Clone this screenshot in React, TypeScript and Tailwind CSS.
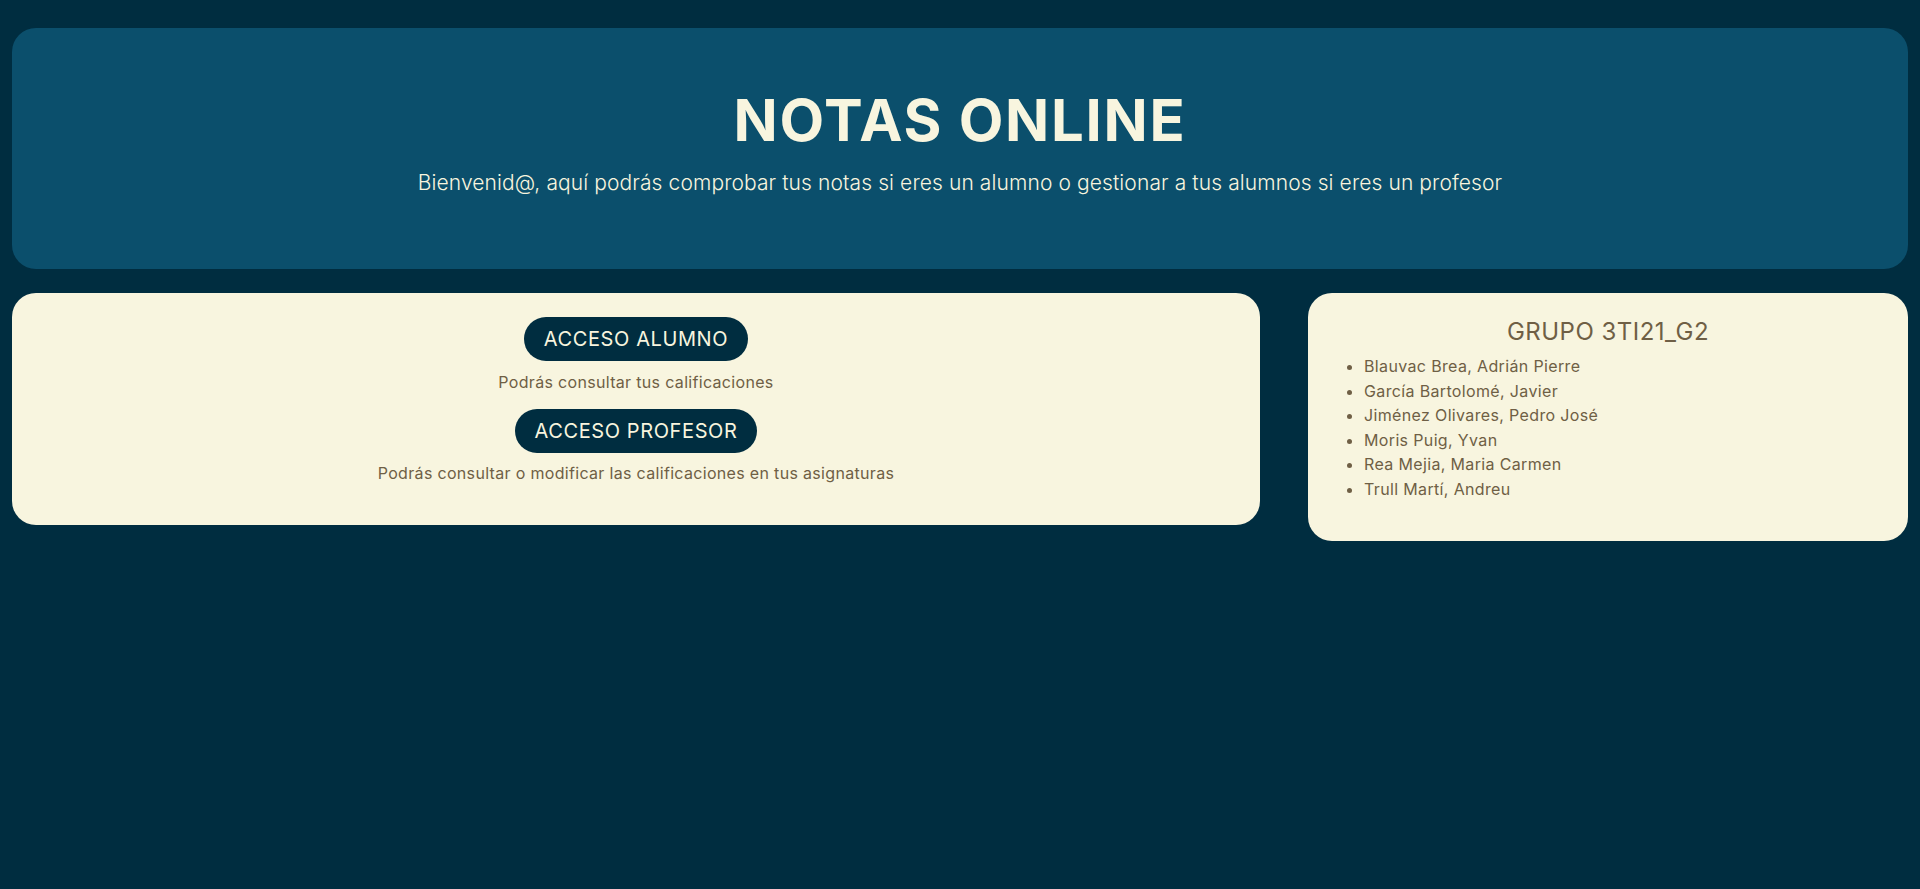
const alumnos = [
  'Blauvac Brea, Adrián Pierre',
  'García Bartolomé, Javier',
  'Jiménez Olivares, Pedro José',
  'Moris Puig, Yvan',
  'Rea Mejia, Maria Carmen',
  'Trull Martí, Andreu',
];

const AccessButton = ({ label }: { label: string }) => (
  <button className="h-11 rounded-full bg-[#002d40] px-5 text-xl font-normal tracking-[0.03em] text-[#f8f5df]">
    {label}
  </button>
);

const App = () => {
  return (
    <div className="min-h-screen bg-[#002d40] px-3 pt-7 font-['Inter',sans-serif]">
      <header className="flex h-[241px] flex-col items-center rounded-3xl bg-[#0b4f6c] pt-[59px] text-[#f8f5df]">
        <h1 className="text-[58px] font-bold leading-[66px] tracking-[0.03em]">NOTAS ONLINE</h1>
        <p className="mt-[16px] text-[21px] font-light leading-7 tracking-[0.005em]">
          Bienvenid@, aquí podrás comprobar tus notas si eres un alumno o gestionar a tus alumnos si eres un
          profesor
        </p>
      </header>

      <main className="mt-[24px] flex items-start gap-12">
        <section className="flex flex-1 flex-col items-center rounded-3xl bg-[#f8f5df] pt-6 pb-[42px] tracking-[0.02em] text-[#6f5f45]">
          <AccessButton label="ACCESO ALUMNO" />
          <p className="mt-[11px] text-base leading-5">Podrás consultar tus calificaciones</p>
          <div className="mt-[17px]">
            <AccessButton label="ACCESO PROFESOR" />
          </div>
          <p className="mt-[10px] text-base leading-5">
            Podrás consultar o modificar las calificaciones en tus asignaturas
          </p>
        </section>

        <aside className="w-[600px] rounded-3xl bg-[#f8f5df] px-4 pt-[23px] pb-[39px] text-[#6f5f45]">
          <h2 className="text-center text-2xl leading-8 tracking-[0.02em]">GRUPO 3TI21_G2</h2>
          <ul className="mt-[6px] list-disc pl-10 text-base leading-[24.6px] tracking-[0.022em]">
            {alumnos.map((nombre) => (
              <li key={nombre}>{nombre}</li>
            ))}
          </ul>
        </aside>
      </main>
    </div>
  );
};

export default App;
